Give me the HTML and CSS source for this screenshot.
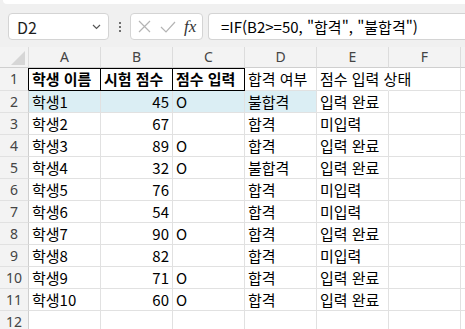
FILE: index.html
```html
<!DOCTYPE html>
<html lang="ko">
<head>
  <meta charset="UTF-8" />
  <meta name="viewport" content="width=device-width,initial-scale=1.0" />
  <title>성적 시트</title>
  <link rel="stylesheet" href="styles.css">
</head>
<body>
  <!-- ───────── RIBBON EDGE ───────── -->
  <div class="ribbon-edge"></div>

  <!-- ───────── FORMULA BAR ───────── -->
  <div class="fbar">
    <div class="namebox">
      <span>D2</span>
      <svg class="chev" width="9" height="6" viewBox="0 0 9 6"><path d="M1 1l3.5 3.5L8 1" fill="none" stroke="#555" stroke-width="1.2"/></svg>
    </div>
    <div class="vdots"><i></i><i></i><i></i></div>
    <div class="fbtns">
      <svg width="13" height="13" viewBox="0 0 13 13"><path d="M1 1l11 11M12 1L1 12" stroke="#b4b4b4" stroke-width="1.2"/></svg>
      <svg width="16" height="12" viewBox="0 0 16 12"><path d="M1 6l5 5L15 1" fill="none" stroke="#b4b4b4" stroke-width="1.2"/></svg>
      <span class="fx">fx</span>
    </div>
    <div class="formula">=IF(B2&gt;=50, "합격", "불합격")</div>
  </div>

  <!-- ───────── SHEET ───────── -->
  <div class="sheet">
    <div class="row colhead">
      <div class="corner"><svg width="14" height="14" viewBox="0 0 14 14"><path d="M14 0v14H0z" fill="#d6d6d6"/></svg></div>
      <div>A</div><div>B</div><div>C</div><div>D</div><div>E</div><div>F</div><div></div>
    </div>

    <div class="row first">
      <div class="rh">1</div>
      <div class="c hd">학생 이름</div><div class="c hd">시험 점수</div><div class="c hd">점수 입력</div>
      <div class="c">합격 여부</div><div class="c spill">점수 입력 상태</div><div class="c"></div><div class="c"></div>
    </div>
    <div class="row">
      <div class="rh">2</div>
      <div class="c fill">학생1</div><div class="c fill num">45</div><div class="c fill">O</div>
      <div class="c fill">불합격</div><div class="c">입력 완료</div><div class="c"></div><div class="c"></div>
    </div>
    <div class="row">
      <div class="rh">3</div>
      <div class="c">학생2</div><div class="c num">67</div><div class="c"></div>
      <div class="c">합격</div><div class="c">미입력</div><div class="c"></div><div class="c"></div>
    </div>
    <div class="row">
      <div class="rh">4</div>
      <div class="c">학생3</div><div class="c num">89</div><div class="c">O</div>
      <div class="c">합격</div><div class="c">입력 완료</div><div class="c"></div><div class="c"></div>
    </div>
    <div class="row">
      <div class="rh">5</div>
      <div class="c">학생4</div><div class="c num">32</div><div class="c">O</div>
      <div class="c">불합격</div><div class="c">입력 완료</div><div class="c"></div><div class="c"></div>
    </div>
    <div class="row">
      <div class="rh">6</div>
      <div class="c">학생5</div><div class="c num">76</div><div class="c"></div>
      <div class="c">합격</div><div class="c">미입력</div><div class="c"></div><div class="c"></div>
    </div>
    <div class="row">
      <div class="rh">7</div>
      <div class="c">학생6</div><div class="c num">54</div><div class="c"></div>
      <div class="c">합격</div><div class="c">미입력</div><div class="c"></div><div class="c"></div>
    </div>
    <div class="row">
      <div class="rh">8</div>
      <div class="c">학생7</div><div class="c num">90</div><div class="c">O</div>
      <div class="c">합격</div><div class="c">입력 완료</div><div class="c"></div><div class="c"></div>
    </div>
    <div class="row">
      <div class="rh">9</div>
      <div class="c">학생8</div><div class="c num">82</div><div class="c"></div>
      <div class="c">합격</div><div class="c">미입력</div><div class="c"></div><div class="c"></div>
    </div>
    <div class="row">
      <div class="rh">10</div>
      <div class="c">학생9</div><div class="c num">71</div><div class="c">O</div>
      <div class="c">합격</div><div class="c">입력 완료</div><div class="c"></div><div class="c"></div>
    </div>
    <div class="row">
      <div class="rh">11</div>
      <div class="c">학생10</div><div class="c num">60</div><div class="c">O</div>
      <div class="c">합격</div><div class="c">입력 완료</div><div class="c"></div><div class="c"></div>
    </div>
    <div class="row">
      <div class="rh">12</div>
      <div class="c"></div><div class="c"></div><div class="c"></div>
      <div class="c"></div><div class="c"></div><div class="c"></div><div class="c"></div>
    </div>
  </div>
</body>
</html>
```

FILE: styles.css
```css
:root{
  --chrome:#f0f0f0;
  --grid:#e1e1e1;
  --head:#f3f3f3;
  --fill:#dbeef4;
  --kr:"Noto Sans CJK KR","Noto Sans",sans-serif;
}

*,*::before,*::after{box-sizing:border-box;margin:0;padding:0}

html,body{width:100%;height:100%;overflow:hidden;background:var(--chrome);font-family:var(--kr);color:#000}

/* ---------- RIBBON EDGE ---------- */
.ribbon-edge{height:4px;margin-left:3px;background:#fff;border-bottom-left-radius:7px}

/* ---------- FORMULA BAR ---------- */
.fbar{display:flex;align-items:stretch;height:27px;margin:9px 0 7px 8px}
.namebox{width:101px;background:#fff;border:1px solid #d4d4d4;border-radius:4px;
         display:flex;align-items:center;justify-content:space-between;padding:0 7px 0 8px;
         font-size:16px;color:#1e1e1e}
.vdots{width:21px;display:flex;flex-direction:column;align-items:center;justify-content:center;gap:2px}
.vdots i{width:2px;height:2px;border-radius:1px;background:#444}
.fbtns{width:73px;background:#fff;border:1px solid #d4d4d4;border-radius:4px;
       display:flex;align-items:center;gap:9px;padding:0 0 0 7px}
.fx{font-family:"Liberation Serif",serif;font-style:italic;font-size:17px;color:#333;margin-left:-1px}
.formula{flex:1;margin-left:5px;background:#fff;border:1px solid #d4d4d4;border-right:none;
         border-radius:4px 0 0 4px;padding:0 0 0 12px;font-size:15px;line-height:25px;white-space:nowrap}

/* ---------- SHEET ---------- */
.sheet{background:#fff}
.row{display:grid;grid-template-columns:29px repeat(7,72px);height:22px}
.row.first{height:23px}
.row>div{border-right:1px solid var(--grid);border-bottom:1px solid var(--grid);white-space:nowrap}

.colhead{height:21px;background:var(--head)}
.colhead>div{text-align:center;font-family:"Noto Sans",sans-serif;font-size:14px;line-height:20px;color:#444;
             border-right-color:#dcdcdc;border-bottom-color:#cfcfcf}
.corner{display:flex;align-items:flex-end;justify-content:flex-end;padding:0 3px 2px 0}
.corner svg{display:block}

.rh{background:var(--head);text-align:center;font-family:"Noto Sans",sans-serif;font-size:14px;line-height:21px;color:#444;
    border-right-color:#cfcfcf !important}

.c{font-size:15px;line-height:21px;padding:0 3px}
.c.num{text-align:right}
.c.fill{background:var(--fill)}
.c.spill{border-right-color:transparent !important}

/* header cells with black box */
.c.hd{font-weight:700;border-right-color:#000 !important;border-bottom-color:#000 !important;box-shadow:inset 0 1px 0 #000}
.first .rh{border-right-color:#000 !important}
```
